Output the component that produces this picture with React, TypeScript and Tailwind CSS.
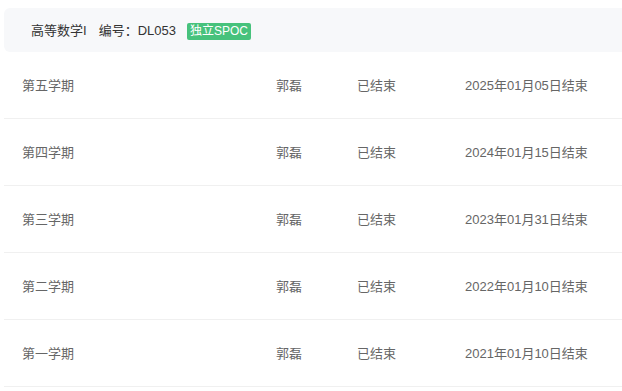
const TERMS = [
  { name: "第五学期", teacher: "郭磊", status: "已结束", end: "2025年01月05日结束" },
  { name: "第四学期", teacher: "郭磊", status: "已结束", end: "2024年01月15日结束" },
  { name: "第三学期", teacher: "郭磊", status: "已结束", end: "2023年01月31日结束" },
  { name: "第二学期", teacher: "郭磊", status: "已结束", end: "2022年01月10日结束" },
  { name: "第一学期", teacher: "郭磊", status: "已结束", end: "2021年01月10日结束" },
];

export default function App() {
  return (
    <div
      className="min-h-[391px] bg-white pl-1 pt-2 text-[13px]"
      style={{ fontFamily: '"Liberation Sans", "Noto Sans CJK SC", sans-serif' }}
    >
      <div className="flex h-[44px] items-center rounded-l-md bg-[#f7f8fa] pl-[27px] pt-[2px] text-[#333]">
        <span>高等数学I</span>
        <span className="ml-[12px]">编号：DL053</span>
        <span className="ml-[11px] flex h-[17px] items-center rounded-[2px] bg-[#47c27c] px-[3px] text-[12px] text-white">
          独立SPOC
        </span>
      </div>

      <div>
        {TERMS.map((term) => (
          <div
            key={term.name}
            className="grid h-[67px] grid-cols-[254px_81px_108px_1fr] items-center border-b border-[#f0f0f0] pl-[18px] pt-[2px] text-[#666]"
          >
            <span>{term.name}</span>
            <span>{term.teacher}</span>
            <span>{term.status}</span>
            <span>{term.end}</span>
          </div>
        ))}
      </div>
    </div>
  );
}
